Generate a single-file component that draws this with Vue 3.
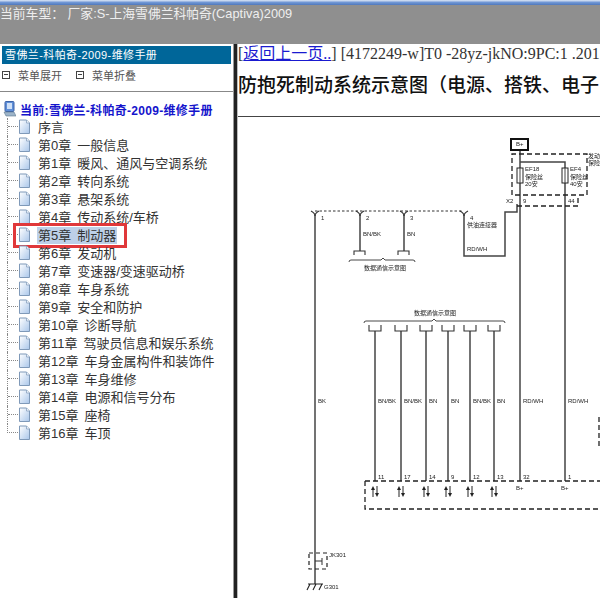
<template>
  <div class="page">
    <header class="topbar">
      <div class="strip" />
      <div class="car-line">当前车型：  厂家:S-上海雪佛兰科帕奇(Captiva)2009</div>
    </header>
    <div class="main">
      <aside class="sidebar">
        <div class="side-title">雪佛兰-科帕奇-2009-维修手册</div>
        <div class="menu-row">
          <span v-for="m in menus" :key="m" class="menu-item"><i class="menu-icon" />{{ m }}</span>
        </div>
        <div class="tree">
          <div class="tree-root">
            <svg class="pc-icon" viewBox="0 0 13 16" width="13" height="16">
              <rect x="2" y="0.5" width="9" height="10" rx="1" fill="#5f8fd8" stroke="#3c63a8" />
              <rect x="4" y="2" width="5" height="6" fill="#cfe0f7" />
              <path d="M1 11 L11 11 L13 15 L3 15 Z" fill="#9db4c9" stroke="#60788f" stroke-width="0.6" />
            </svg>
            当前:雪佛兰-科帕奇-2009-维修手册
          </div>
          <svg class="defs" width="0" height="0">
            <defs>
              <linearGradient id="docFill" x1="0" y1="0" x2="1" y2="1">
                <stop offset="0" stop-color="#ffffff" />
                <stop offset="1" stop-color="#a9c6ea" />
              </linearGradient>
            </defs>
          </svg>
          <ul class="tree-list">
            <li v-for="c in chapters" :key="c" class="tree-item" :class="{ active: c === activeChapter }">
              <span class="branch" />
              <svg class="doc-icon" viewBox="0 0 13 16" width="13" height="16">
                <path d="M1.5 1 H8.5 L11.5 4 V14.5 H1.5 Z" fill="url(#docFill)" stroke="#7f99b8" />
                <path d="M8.5 1 V4 H11.5" fill="#eef4fb" stroke="#7f99b8" stroke-width="0.7" />
              </svg>
              <span class="tree-label">{{ c }}</span>
            </li>
          </ul>
        </div>
      </aside>
      <div class="divider" />
      <section class="content">
        <div class="crumb">[<a class="back" href="#">返回上一页..</a>] [4172249-w]T0 -28yz-jkNO:9PC:1 .201</div>
        <h1 class="doc-title">防抱死制动系统示意图（电源、搭铁、电子</h1>
        <svg class="diagram" viewBox="238 118 362 480" width="362" height="480">
          <g fill="none" stroke="#333">
            <!-- main wires -->
            <path v-for="w in wires" :key="w" :d="w" stroke-width="1.5" stroke="#444" />
            <!-- dashed outlines -->
            <path v-for="d in dashes" :key="d" :d="d" stroke-width="1.3" stroke="#222" stroke-dasharray="5 3" />
            <path d="M315 212 H463" stroke-width="1" stroke-dasharray="2.5 2" />
            <!-- connector forks on the top line -->
            <path v-for="x in forks" :key="x" :d="`M${x - 4} 212 Q${x} 214 ${x} 217 Q${x} 214 ${x + 4} 212`" stroke-width="1.2" />
            <!-- B+ box and fuses -->
            <rect x="511" y="140" width="17" height="11" stroke="#111" stroke-width="2" fill="#fff" />
            <rect x="517" y="169" width="6" height="15" stroke="#222" fill="#fff" />
            <rect x="562" y="169" width="6" height="15" stroke="#222" fill="#fff" />
            <path d="M520 169 V184 M565 169 V184" stroke="#444" />
            <!-- braces -->
            <path d="M349 263 Q349 261 351 261 H381 L383 259 L385 261 H413 Q415 261 415 263" stroke-width="0.9" />
            <path d="M364 324 Q364 322 366 322 H432 L434 320 L436 322 H503 Q505 322 505 324" stroke-width="0.9" />
            <!-- plugs -->
            <path v-for="x in topPlugs" :key="x" :d="`M${x - 6} 256 V252 H${x + 5} V256`" stroke-width="1.1" />
            <path v-for="x in busWires" :key="x" :d="`M${x - 6} 326 V332 H${x + 6} V326`" stroke-width="1.1" />
            <!-- JK301 and ground -->
            <rect x="309" y="554" width="18" height="16" stroke-width="1.2" stroke="#222" stroke-dasharray="4 3" />
            <path d="M315 562 H322 M322 559 V566" stroke-width="1" />
            <path d="M308 585 H323 M310 585 L307 591 M316 585 L313 591 M322 585 L319 591" stroke-width="1.1" stroke="#222" />
          </g>
          <!-- data line arrows -->
          <g v-for="x in busWires" :key="x" stroke="#222" stroke-width="1" fill="#222">
            <path :d="`M${x - 2} 498 V490`" />
            <path :d="`M${x - 4} 491 L${x - 2} 487 L${x} 491 Z`" stroke="none" />
            <path :d="`M${x + 2} 487 V495`" />
            <path :d="`M${x} 494 L${x + 2} 498 L${x + 4} 494 Z`" stroke="none" />
          </g>
          <g class="labels">
            <text v-for="l in labels" :key="l.t + l.x + l.y" :x="l.x" :y="l.y">{{ l.t }}</text>
          </g>
        </svg>
      </section>
    </div>
  </div>
</template>

<script setup>
const menus = ['菜单展开', '菜单折叠']
const activeChapter = '第5章 制动器'

const chapters = [
  '序言',
  '第0章 一般信息',
  '第1章 暖风、通风与空调系统',
  '第2章 转向系统',
  '第3章 悬架系统',
  '第4章 传动系统/车桥',
  '第5章 制动器',
  '第6章 发动机',
  '第7章 变速器/变速驱动桥',
  '第8章 车身系统',
  '第9章 安全和防护',
  '第10章 诊断导航',
  '第11章 驾驶员信息和娱乐系统',
  '第12章 车身金属构件和装饰件',
  '第13章 车身维修',
  '第14章 电源和信号分布',
  '第15章 座椅',
  '第16章 车顶'
]

const busWires = [375, 401, 426, 448, 470, 494]
const topPlugs = [360, 404]
const forks = [315, 360, 404, 464]

const wires = [
  'M315 216 V585',
  'M360 216 V252',
  'M404 216 V252',
  'M464 216 V257 H505 V213 H517 V205',
  'M520 151 V482',
  'M520 163 H565 V482',
  ...busWires.map((x) => `M${x} 332 V482`)
]

const dashes = [
  'M512 196 V155 H587 V196 H512',
  'M517 207 H578 V197',
  'M365 482 H600 M365 482 V510 H600',
  'M599 418 V450'
]

const labels = [
  { t: 'B+', x: 516, y: 147 },
  { t: '发动', x: 588, y: 159 },
  { t: '保险', x: 588, y: 166 },
  { t: 'EF18', x: 525, y: 172 },
  { t: '保险丝', x: 525, y: 180 },
  { t: '20安', x: 525, y: 187 },
  { t: 'EF4', x: 570, y: 172 },
  { t: '保险丝', x: 570, y: 180 },
  { t: '40安', x: 570, y: 187 },
  { t: 'X2', x: 506, y: 204 },
  { t: '9', x: 523, y: 204 },
  { t: '44', x: 568, y: 204 },
  { t: '1', x: 321, y: 221 },
  { t: '2', x: 366, y: 221 },
  { t: '3', x: 410, y: 221 },
  { t: '4', x: 470, y: 221 },
  { t: '供油连接器', x: 467, y: 228 },
  { t: 'BN/BK', x: 363, y: 237 },
  { t: 'BN', x: 407, y: 237 },
  { t: 'RD/WH', x: 467, y: 252 },
  { t: '数据通信示意图', x: 364, y: 271 },
  { t: '数据通信示意图', x: 414, y: 316 },
  { t: 'BK', x: 318, y: 404 },
  { t: 'BN/BK', x: 378, y: 404 },
  { t: 'BN/BK', x: 404, y: 404 },
  { t: 'BN', x: 429, y: 404 },
  { t: 'BN', x: 451, y: 404 },
  { t: 'BN/BK', x: 473, y: 404 },
  { t: 'BN', x: 497, y: 404 },
  { t: 'RD/WH', x: 523, y: 404 },
  { t: 'RD/WH', x: 568, y: 404 },
  { t: '11', x: 378, y: 480 },
  { t: '17', x: 404, y: 480 },
  { t: '14', x: 429, y: 480 },
  { t: '9', x: 451, y: 480 },
  { t: '12', x: 473, y: 480 },
  { t: '13', x: 497, y: 480 },
  { t: '32', x: 523, y: 480 },
  { t: '1', x: 568, y: 480 },
  { t: 'B+', x: 516, y: 491 },
  { t: 'B+', x: 561, y: 491 },
  { t: 'JK301', x: 329, y: 558 },
  { t: 'G301', x: 324, y: 590 }
]
</script>

<style>
html,
body {
  margin: 0;
  background: #fff;
}
</style>

<style scoped>
.page {
  width: 600px;
  height: 598px;
  overflow: hidden;
  display: flex;
  flex-direction: column;
  background: #fff;
  font-family: "Liberation Sans", "Noto Sans CJK SC", sans-serif;
}

.topbar {
  height: 44px;
  background: #8f8f8f;
  flex: none;
}

.strip {
  height: 5px;
  background: linear-gradient(180deg, #dfe9f7, #6f96d4 50%, #4f78bc);
}

.car-line {
  color: #eee;
  font-size: 12.8px;
  line-height: 17px;
  white-space: pre;
}

.main {
  flex: 1;
  display: flex;
  min-height: 0;
}

.sidebar {
  width: 233px;
  flex: none;
  padding-top: 2px;
}

.side-title {
  margin: 0 2px;
  height: 18px;
  line-height: 18px;
  padding-left: 3px;
  background: #006699;
  color: #fff;
  font-size: 11px;
  letter-spacing: 0.4px;
}

.menu-row {
  display: flex;
  gap: 14px;
  height: 28px;
  align-items: center;
  padding-left: 2px;
  padding-bottom: 6px;
  border-bottom: 1px solid #888;
  box-sizing: border-box;
  color: #555;
  font-size: 11px;
}

.menu-item {
  display: flex;
  align-items: center;
  gap: 8px;
}

.menu-icon {
  width: 6px;
  height: 6px;
  border: 1px solid #444;
  background: linear-gradient(#444, #444) center / 4px 1px no-repeat;
}

.tree {
  padding-top: 8px;
}

.tree-root {
  display: flex;
  align-items: center;
  gap: 4px;
  height: 18px;
  padding-left: 3px;
  color: #1414cc;
  font-size: 12px;
  font-weight: 700;
  letter-spacing: 0.3px;
}

.defs {
  display: block;
}

.tree-list {
  list-style: none;
  margin: 0 0 0 7px;
  padding: 0;
}

.tree-item {
  display: flex;
  align-items: center;
  height: 18px;
  border-left: 1px dotted #888;
  color: #333;
  font-size: 13px;
  word-spacing: 2.4px;
  white-space: nowrap;
  position: relative;
}

.tree-item:last-child {
  border-left-color: transparent;
}

.branch {
  align-self: flex-start;
  width: 10px;
  height: 9px;
  border-bottom: 1px dotted #888;
  box-sizing: border-box;
  flex: none;
}

.tree-item:last-child .branch {
  border-left: 1px dotted #888;
  margin-left: -1px;
  width: 11px;
}

.doc-icon {
  flex: none;
  margin-right: 7px;
}

.tree-label {
  line-height: 17px;
}

.tree-item.active .tree-label {
  background: #bdd0e8;
  margin-left: -1px;
  padding: 0 1px;
}

.tree-item.active::after {
  content: "";
  position: absolute;
  left: 5px;
  top: -3px;
  width: 108px;
  height: 19px;
  border: 3px solid #e0383a;
}

.divider {
  width: 5px;
  flex: none;
  box-sizing: border-box;
  background: #222;
  border-left: 1px solid #999;
  border-right: 1px solid #bbb;
}

.content {
  flex: 1;
  min-width: 0;
  overflow: hidden;
  font-family: "Liberation Serif", "Noto Sans CJK SC", serif;
}

.crumb {
  padding-top: 1px;
  font-size: 16px;
  line-height: 18px;
  color: #333;
  white-space: nowrap;
}

.back {
  color: #1a1ad0;
}

.doc-title {
  margin: 3px 0 0;
  padding-top: 7px;
  height: 51px;
  border-bottom: 1px solid #444;
  box-sizing: border-box;
  font-size: 19px;
  line-height: 26px;
  font-weight: 500;
  color: #111;
  white-space: nowrap;
}

.diagram {
  display: block;
  filter: blur(0.35px);
}

.labels {
  font-family: "Liberation Sans", "Noto Sans CJK SC", sans-serif;
  font-size: 6px;
  fill: #222;
}
</style>
